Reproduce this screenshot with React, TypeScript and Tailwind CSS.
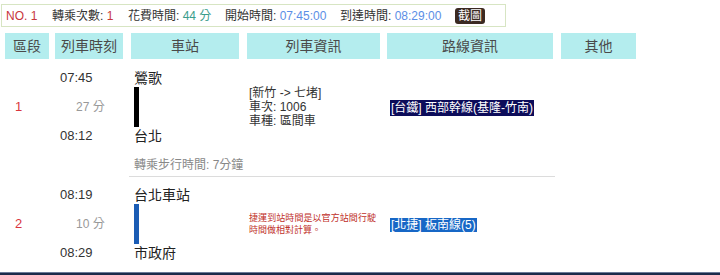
import React from "react";

const font = { fontFamily: '"Liberation Sans", "Noto Sans CJK TC", sans-serif' };

const headers = [
  { label: "區段", w: "w-[44px]" },
  { label: "列車時刻", w: "w-[68px] ml-[6px]" },
  { label: "車站", w: "w-[108px] ml-[8px]" },
  { label: "列車資訊", w: "w-[133px] ml-[8px]" },
  { label: "路線資訊", w: "w-[166px] ml-[7px]" },
  { label: "其他", w: "w-[75px] ml-[8px]" },
];

interface LegProps {
  no: string;
  dep: string;
  arr: string;
  dur: string;
  from: string;
  to: string;
  barColor: string;
  info: React.ReactNode;
  route: React.ReactNode;
}

function Leg({ no, dep, arr, dur, from, to, barColor, info, route }: LegProps) {
  return (
    <div className="flex h-[76px] items-center">
      {/* 區段 */}
      <div className="w-[44px] pl-[10px] text-[13px] text-[#d9363e]">{no}</div>
      {/* 列車時刻 */}
      <div className="ml-[6px] flex h-[76px] w-[68px] flex-col justify-between pl-[5px] text-[13px] leading-[18px] text-[#333]">
        <span>{dep}</span>
        <span className="pl-[16px] text-[12px] text-[#999]">{dur}</span>
        <span>{arr}</span>
      </div>
      {/* 車站 */}
      <div className="ml-[8px] flex h-[76px] w-[108px] flex-col pl-[3px] text-[14px] leading-[18px] text-[#222]">
        <span>{from}</span>
        <div className={`h-[40px] w-[5px] ${barColor}`} />
        <span>{to}</span>
      </div>
      {/* 列車資訊 */}
      <div className="ml-[8px] w-[133px] pl-[2px]">{info}</div>
      {/* 路線資訊 */}
      <div className="ml-[7px] w-[166px] pl-[3px]">{route}</div>
    </div>
  );
}

export default function App() {
  return (
    <div className="flex h-[275px] w-[720px] flex-col overflow-hidden bg-white" style={font}>
      {/* summary bar */}
      <div className="ml-[1px] mt-[4px] flex h-[23px] w-[505px] items-center border border-[#d7e5c3] text-[12px] text-[#333]">
        <span className="w-[50px] pl-[4px] text-[#c8363c]">NO. 1</span>
        <span className="w-[76px]">
          轉乘次數: <span className="text-[#c8363c]">1</span>
        </span>
        <span className="w-[97px]">
          花費時間: <span className="text-[#3a9d8c]">44 分</span>
        </span>
        <span className="w-[115px]">
          開始時間: <span className="text-[#5b8ee6]">07:45:00</span>
        </span>
        <span className="w-[115px]">
          到達時間: <span className="text-[#5b8ee6]">08:29:00</span>
        </span>
        <span className="flex h-[16px] w-[30px] items-center justify-center rounded-[3px] bg-[#3b2a22] text-[12px] text-white">
          截圖
        </span>
      </div>

      {/* table header */}
      <div className="ml-[5px] mt-[6px] flex h-[26px]">
        {headers.map((h) => (
          <div
            key={h.label}
            className={`${h.w} flex items-center justify-center bg-[#b4edee] text-[14px] text-[#4a4a4a]`}
          >
            {h.label}
          </div>
        ))}
      </div>

      <div className="ml-[5px] mt-[10px]">
        <Leg
          no="1"
          dep="07:45"
          arr="08:12"
          dur="27 分"
          from="鶯歌"
          to="台北"
          barColor="bg-black"
          info={
            <div className="text-[12px] leading-[14px] text-[#333]">
              <div>[新竹 -&gt; 七堵]</div>
              <div>車次: 1006</div>
              <div>車種: 區間車</div>
            </div>
          }
          route={
            <span className="bg-[#0c0c5a] px-[1px] py-[1px] text-[12px] leading-[15px] text-white">
              [台鐵] 西部幹線(基隆-竹南)
            </span>
          }
        />
      </div>

      {/* transfer walk */}
      <div className="ml-[129px] mt-[12px] h-[20px] w-[426px] border-b border-[#dcdcdc] pl-[5px] text-[12px] leading-[16px] text-[#888]">
        轉乘步行時間: 7分鐘
      </div>

      <div className="ml-[5px] mt-[9px]">
        <Leg
          no="2"
          dep="08:19"
          arr="08:29"
          dur="10 分"
          from="台北車站"
          to="市政府"
          barColor="bg-[#1b5cb4]"
          info={
            <div className="text-[9px] leading-[12px] text-[#c0302a]">
              <div className="w-[127px] text-justify [text-align-last:justify]">捷運到站時間是以官方站間行駛</div>
              <div>時間做相對計算。</div>
            </div>
          }
          route={
            <span className="bg-[#1767c6] px-[1px] text-[12px] leading-[13px] text-white">
              [北捷] 板南線(5)
            </span>
          }
        />
      </div>

      {/* bottom edge */}
      <div className="mt-auto h-[3px] w-full border-t border-[#6b7a98] bg-[#1c2a4a]" />
    </div>
  );
}
